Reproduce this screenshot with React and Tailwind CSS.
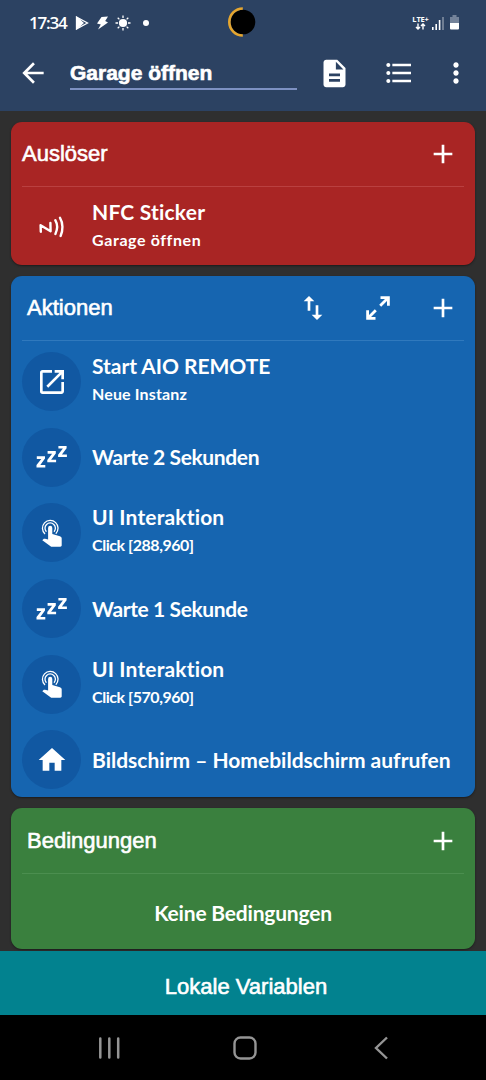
import {
    MdAdd,
    MdArrowBack,
    MdDescription,
    MdFormatListBulleted,
    MdHome,
    MdMoreVert,
    MdOpenInNew,
    MdSwapVert,
} from "react-icons/md";

const ExpandIcon = () => (
    <svg className="size-8" viewBox="0 0 32 32" fill="none" stroke="currentColor" strokeWidth="2.8">
        <path d="M18.5 5.6H26.4V13.7M26.2 5.8L18.2 13.8" />
        <path d="M13.5 26.4H5.6V18.3M5.8 26.2L13.8 18.2" />
    </svg>
);

const NfcIcon = () => (
    <svg className="size-8" viewBox="0 0 32 32" fill="none" stroke="currentColor" strokeWidth="2.4" strokeLinecap="round" strokeLinejoin="round">
        <path d="M4.8 20.8L4.6 14.2L14.6 20.2L14.4 12" />
        <path d="M19.3 9.2C21.6 13.2 21.4 18.8 19.4 23" />
        <path d="M24 6.8C27.2 12 27.1 19.6 24.6 25" />
    </svg>
);

const SleepIcon = () => (
    <svg className="size-8" viewBox="0 0 32 32" fill="currentColor">
        <path d="M.8 15.3H9V17.6L4.3 23.9H9.3V26.5H.5V24.1L5.3 17.9H.8Z" />
        <path d="M11.6 10.1H19.8V12.4L15.1 18.7H20.1V21.3H11.3V18.9L16.1 12.7H11.6Z" />
        <path d="M22.4 4.9H30.6V7.2L25.9 13.5H30.9V16.1H22.1V13.7L26.9 7.5H22.4Z" />
    </svg>
);

const TapIcon = () => (
    <svg className="size-8" viewBox="0 0 32 32" fill="none">
        <path d="M10.4 14.7A5.2 5.2 0 1 1 18 14.7" stroke="currentColor" strokeWidth="1.3" />
        <path d="M9 17A7.8 7.8 0 1 1 19.8 16.7" stroke="currentColor" strokeWidth="1.3" />
        <path
            fill="currentColor"
            d="M12.1 10.9a2.1 2.1 0 0 1 4.2 0v6.2l7.6 2.1c1.3.4 1.9 1.4 1.8 2.6v6.5c-.1 1-.5 1.4-1.4 1.4H15.2L6.3 23.2l1-1c.5-.5 1-.6 1.7-.4l3.1.7z"
        />
    </svg>
);

const icons = {
    nfc: <NfcIcon />,
    open: <MdOpenInNew className="size-8" />,
    sleep: <SleepIcon />,
    tap: <TapIcon />,
    home: <MdHome className="size-8" />,
};

const triggers = [
    { icon: "nfc", title: "NFC Sticker", titleClass: "tracking-[0.2px]", sub: "Garage öffnen", subClass: "tracking-[0.6px]" },
];

const actions = [
    { icon: "open", title: "Start AIO REMOTE", titleClass: "tracking-[-0.05px]", sub: "Neue Instanz", subClass: "tracking-[0.15px]" },
    { icon: "sleep", title: "Warte 2 Sekunden", titleClass: "tracking-[-0.38px]" },
    { icon: "tap", title: "UI Interaktion", titleClass: "tracking-[0.15px]", sub: "Click [288,960]", subClass: "tracking-[-0.45px]" },
    { icon: "sleep", title: "Warte 1 Sekunde", titleClass: "tracking-[-0.38px]" },
    { icon: "tap", title: "UI Interaktion", titleClass: "tracking-[0.15px]", sub: "Click [570,960]", subClass: "tracking-[-0.45px]" },
    { icon: "home", title: "Bildschirm – Homebildschirm aufrufen", titleClass: "tracking-[0px]" },
];

const StatusBar = () => (
    <div className="flex h-[45px] items-center pl-[29px] pr-[27px]">
        <span className="w-[40px] whitespace-nowrap font-['Open_Sans'] text-[17px] font-semibold leading-none tracking-[-1.2px]">17:34</span>
        <svg className="ml-[6px] h-[14px] w-[14px]" viewBox="0 0 14 14" fill="none" stroke="currentColor" strokeWidth="1.3">
            <path d="M1.5 1L12.5 7L1.5 13Z" />
            <path d="M2 1.5L8 7L2 12.5Z" fill="currentColor" />
        </svg>
        <svg className="ml-[7px] h-[14px] w-[13px]" viewBox="0 0 13 14" fill="currentColor">
            <path d="M5.5 1L12 .5L9.2 5L12 6.4L2 13.5L4.8 8.6L1 7.6Z" />
        </svg>
        <svg className="ml-[6px] h-[16px] w-[16px]" viewBox="0 0 16 16" stroke="currentColor" strokeWidth="1.3">
            <circle cx="8" cy="8" r="4.1" fill="currentColor" stroke="none" />
            <path d="M8 .5V3M8 13V15.5M.5 8H3M13 8H15.5M2.7 2.7L4.4 4.4M11.6 11.6L13.3 13.3M2.7 13.3L4.4 11.6M11.6 4.4L13.3 2.7" />
        </svg>
        <span className="ml-[12px] size-[6px] rounded-full bg-white"></span>
        {/* camera hole with charging ring */}
        <svg className="ml-[79px] mb-[2px] h-[32px] w-[28px]" viewBox="0 0 28 32">
            <circle cx="15" cy="16" r="12.3" fill="#000" />
            <path d="M15 2.2A13.3 13.3 0 0 0 15 29.2" transform="translate(-.2 .3)" fill="none" stroke="#e5a62f" strokeWidth="2.6" />
        </svg>
        <div className="ml-auto flex items-center">
            <div className="flex w-[17px] flex-col items-center">
                <span className="font-['Open_Sans'] text-[7.5px] font-bold leading-[8px] tracking-[-0.2px]">LTE+</span>
                <svg className="h-[7px] w-[11px]" viewBox="0 0 11 7" fill="none" stroke="currentColor" strokeWidth="1.4">
                    <path d="M3 .5V6M1 3.9L3 6L5 3.9M8 6.5V1M6 3.1L8 1L10 3.1" />
                </svg>
            </div>
            <svg className="ml-[3px] h-[14px] w-[12px]" viewBox="0 0 12 14" fill="currentColor">
                <rect x="0" y="11" width="1.6" height="3" />
                <rect x="3.4" y="8" width="1.6" height="6" />
                <rect x="6.8" y="4" width="1.6" height="10" />
                <rect x="10.2" y="1" width="1.6" height="13" opacity=".4" />
            </svg>
            <svg className="ml-[6px] mb-[1px] h-[15px] w-[9px]" viewBox="0 0 9 15">
                <path d="M2.5 0H6.5V2H9V8H0V2H2.5Z" fill="#74839a" />
                <path d="M0 8H9V13.5Q9 14.5 8 14.5H1Q0 14.5 0 13.5Z" fill="#fff" />
            </svg>
        </div>
    </div>
);

const CardHeader = ({ title, titleClass, divider, children }) => (
    <div className={`mx-[11px] flex items-center border-b pr-[5px] ${divider}`}>
        <h2 className={`flex-1 text-[22px] leading-none [-webkit-text-stroke:0.6px_white] ${titleClass}`}>{title}</h2>
        {children}
        <MdAdd className="size-8" />
    </div>
);

const Row = ({ item, circle }) => (
    <div className="flex h-[75.6px] items-center pl-[11px]">
        <div className={`flex size-[59px] shrink-0 items-center justify-center rounded-full ${circle}`}>
            {icons[item.icon]}
        </div>
        <div className="ml-[11px] whitespace-nowrap font-[Lato,sans-serif] font-bold">
            <p className={`text-[21px] leading-[28px] ${item.titleClass}`}>{item.title}</p>
            {item.sub && <p className={`pb-[3px] text-[16px] leading-[28px] ${item.subClass}`}>{item.sub}</p>}
        </div>
    </div>
);

const App = () => {
    return (
        <div className="flex h-[1080px] w-[486px] flex-col overflow-hidden bg-[#2f2f2f] font-['Liberation_Sans',sans-serif] text-white">
            <header className="h-[111px] shrink-0 bg-[#2c4262]">
                <StatusBar />
                <div className="flex h-[56px] items-center pl-[17px] pr-[14px]">
                    <MdArrowBack className="size-8" />
                    <div className="ml-[21px] flex h-[33px] w-[227px] items-center border-b-2 border-[#7d91c2]">
                        <span className="text-[21px] font-bold leading-none [-webkit-text-stroke:0.6px_white]">Garage öffnen</span>
                    </div>
                    <MdDescription className="ml-[21px] size-[33px]" />
                    <MdFormatListBulleted className="ml-[32px] size-8" />
                    <MdMoreVert className="ml-auto size-8" />
                </div>
            </header>

            <main className="flex h-[840px] shrink-0 flex-col gap-[11px] px-[11px] pt-[11px]">
                <section className="h-[143px] rounded-[11px] bg-[#a92524] shadow-[0_1px_2px_#1c1c1c]">
                    <CardHeader title="Auslöser" titleClass="" divider="h-[65px] border-[#ba4040]" />
                    <div className="pt-[2.5px]">
                        {triggers.map((item, i) => (
                            <Row key={i} item={item} circle="" />
                        ))}
                    </div>
                </section>

                <section className="h-[521px] rounded-[11px] bg-[#1665b0] shadow-[0_1px_2px_#1c1c1c]">
                    <CardHeader title="Aktionen" titleClass="pl-[5px]" divider="h-[65px] border-[#3079bd]">
                        <MdSwapVert className="mr-[33px] size-8" />
                        <div className="mr-[33px]"><ExpandIcon /></div>
                    </CardHeader>
                    <div className="pt-[3px]">
                        {actions.map((item, i) => (
                            <Row key={i} item={item} circle="bg-[#1158a2]" />
                        ))}
                    </div>
                </section>

                <section className="h-[141px] rounded-[11px] bg-[#3a803e] shadow-[0_1px_2px_#1c1c1c]">
                    <CardHeader title="Bedingungen" titleClass="pl-[5px]" divider="h-[66px] border-[#4b8e4f]" />
                    <p className="flex h-[78px] items-center justify-center font-[Lato,sans-serif] text-[21px] font-bold tracking-[-0.2px]">Keine Bedingungen</p>
                </section>
            </main>

            <footer className="shrink-0">
                <div className="flex h-[64px] items-center justify-center bg-[#02828f] pt-[7px] pl-[6px]">
                    <span className="text-[22px] leading-none [-webkit-text-stroke:0.6px_white]">Lokale Variablen</span>
                </div>
                <div className="flex h-[65px] items-center bg-black pl-[98px] pt-px text-[#959595]">
                    <svg className="h-[24px] w-[22px]" viewBox="0 0 22 24" stroke="currentColor" strokeWidth="2.5" strokeLinecap="round">
                        <path d="M2.3 2.5V21.5M11.3 2.5V21.5M20.2 2.5V21.5" />
                    </svg>
                    <svg className="ml-[113px] h-[24px] w-[24px]" viewBox="0 0 24 24" fill="none" stroke="currentColor" strokeWidth="2.4">
                        <rect x="1.5" y="1.5" width="21" height="21" rx="6" />
                    </svg>
                    <svg className="ml-[117px] h-[24px] w-[14px]" viewBox="0 0 14 24" fill="none" stroke="currentColor" strokeWidth="2.4">
                        <path d="M13 1.5L2 12L13 22.5" />
                    </svg>
                </div>
            </footer>
        </div>
    );
};

export default App;
